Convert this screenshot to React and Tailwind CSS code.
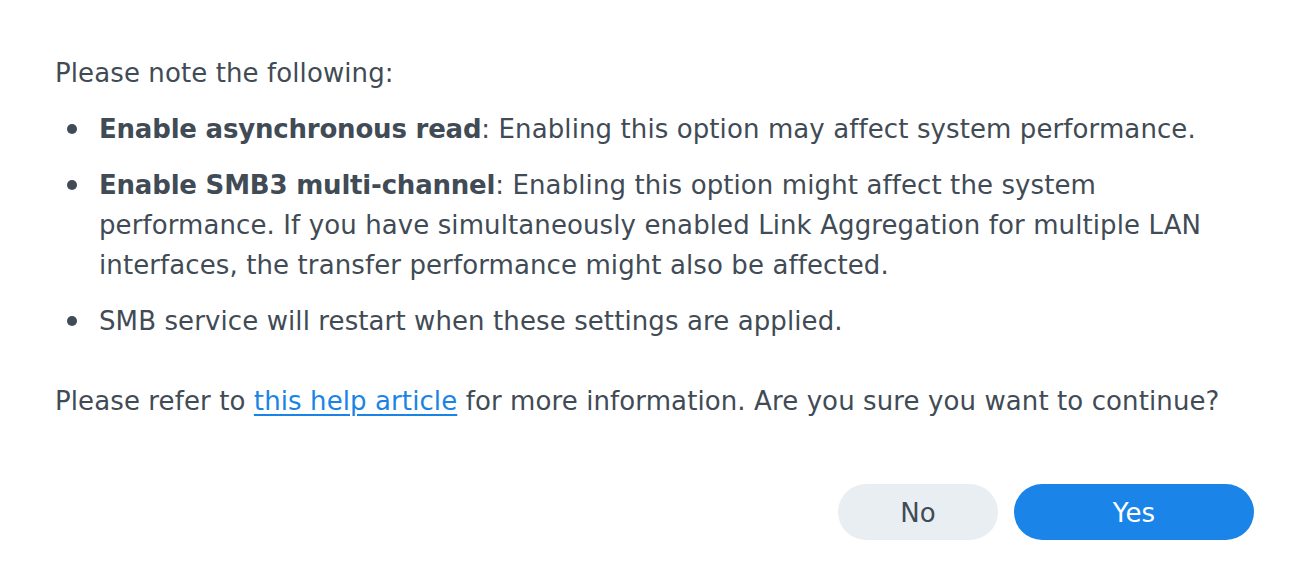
import React from 'react';

function Bullet() {
  return (
    <span className="w-[44px] shrink-0 pl-[12px] pt-[15px]">
      <span className="block w-[10px] h-[10px] rounded-full bg-[#414b55]" />
    </span>
  );
}

export default function App() {
  return (
    <div
      className="w-[1308px] h-[572px] bg-white text-[#414b55] text-[26px] leading-[40px] tracking-[0.1px]"
      style={{ fontFamily: '"DejaVu Sans", Verdana, sans-serif' }}
    >
      <div className="pt-[53px] pl-[55px] pr-[54px] flex flex-col">
        <p>Please note the following:</p>

        <ul className="mt-[16px] flex flex-col gap-[16px]">
          <li className="flex">
            <Bullet />
            <span>
              <b className="tracking-[-0.2px]">Enable asynchronous read</b>: Enabling this option may affect system performance.
            </span>
          </li>
          <li className="flex">
            <Bullet />
            <span>
              <b className="tracking-[-0.2px]">Enable SMB3 multi-channel</b>: Enabling this option might affect the system
              performance. If you have simultaneously enabled Link Aggregation for multiple LAN
              interfaces, the transfer performance might also be affected.
            </span>
          </li>
          <li className="flex">
            <Bullet />
            <span>SMB service will restart when these settings are applied.</span>
          </li>
        </ul>

        <p className="mt-[40px]">
          Please refer to{' '}
          <a href="#" className="text-[#1a84e6] underline underline-offset-[4px]">
            this help article
          </a>{' '}
          for more information. Are you sure you want to continue?
        </p>

        <div className="mt-[63px] flex justify-end gap-[16px]">
          <button className="w-[160px] h-[56px] pt-[2px] rounded-full bg-[#e9eef3] text-[#414b55]">
            No
          </button>
          <button className="w-[240px] h-[56px] pt-[2px] rounded-full bg-[#1a84e8] text-white">
            Yes
          </button>
        </div>
      </div>
    </div>
  );
}
